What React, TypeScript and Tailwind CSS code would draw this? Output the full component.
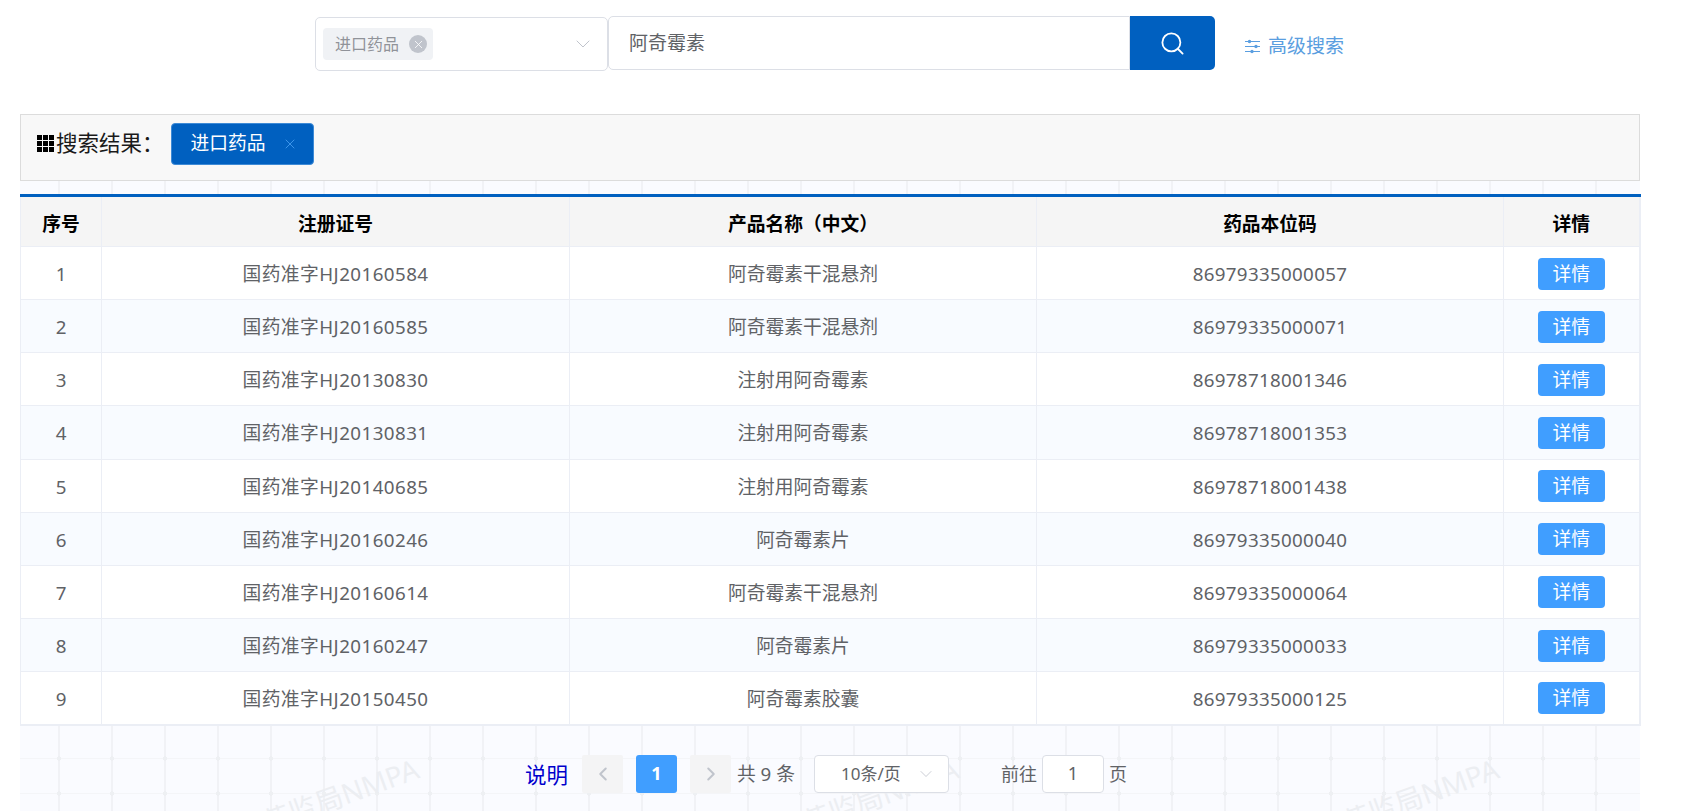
import React from "react";
import { ChevronDown, ChevronLeft, ChevronRight, Search, X } from "lucide-react";

interface DrugRow {
  id: number;
  reg: string;
  name: string;
  code: string;
}

const rows: DrugRow[] = [
  { id: 1, reg: "国药准字HJ20160584", name: "阿奇霉素干混悬剂", code: "86979335000057" },
  { id: 2, reg: "国药准字HJ20160585", name: "阿奇霉素干混悬剂", code: "86979335000071" },
  { id: 3, reg: "国药准字HJ20130830", name: "注射用阿奇霉素", code: "86978718001346" },
  { id: 4, reg: "国药准字HJ20130831", name: "注射用阿奇霉素", code: "86978718001353" },
  { id: 5, reg: "国药准字HJ20140685", name: "注射用阿奇霉素", code: "86978718001438" },
  { id: 6, reg: "国药准字HJ20160246", name: "阿奇霉素片", code: "86979335000040" },
  { id: 7, reg: "国药准字HJ20160614", name: "阿奇霉素干混悬剂", code: "86979335000064" },
  { id: 8, reg: "国药准字HJ20160247", name: "阿奇霉素片", code: "86979335000033" },
  { id: 9, reg: "国药准字HJ20150450", name: "阿奇霉素胶囊", code: "86979335000125" },
];

const headers = ["序号", "注册证号", "产品名称（中文）", "药品本位码", "详情"];

const App: React.FC = () => {
  return (
    <div className="w-[1690px] h-[811px] overflow-hidden bg-white text-[#606266] font-['Noto_Sans','Noto_Sans_CJK_SC',sans-serif]">
      {/* search bar */}
      <div className="flex items-center h-[114px] pl-[315px] pb-[28px]">
        <div className="flex items-center justify-between w-[293px] h-[54px] mt-[2px] pl-[7px] pr-[12px] border border-[#dcdfe6] rounded-[5px]">
          <div className="flex items-center h-[32px] w-[110px] pl-[12px] bg-[#f0f2f5] rounded-[4px] text-[16px] text-[#909399]">
            进口药品
            <span className="flex items-center justify-center ml-[10px] w-[18px] h-[18px] rounded-full bg-[#c0c4cc] text-white">
              <X size={13} strokeWidth={1.5} />
            </span>
          </div>
          <ChevronDown size={24} strokeWidth={1} className="text-[#c0c4cc]" />
        </div>
        <div className="flex items-center w-[522px] h-[54px] pl-[20px] border border-[#dcdfe6] rounded-l-[5px] text-[19px]">
          阿奇霉素
        </div>
        <div className="flex items-center justify-center w-[85px] h-[54px] bg-[#0060c0] rounded-r-[5px] text-white">
          <Search size={27} strokeWidth={1.6} />
        </div>
        <div className="flex items-center ml-[30px] mt-[6px] text-[19px] text-[#5a9ee0]">
          <svg width="15" height="15" viewBox="0 0 15 15" className="mr-[8px]" fill="currentColor">
            <rect x="0" y="2" width="15" height="1" />
            <rect x="0" y="7" width="15" height="1" />
            <rect x="0" y="12" width="15" height="1" />
            <circle cx="4.5" cy="2.5" r="1.7" />
            <circle cx="11" cy="7.5" r="1.7" />
            <circle cx="7" cy="12.5" r="1.7" />
          </svg>
          高级搜索
        </div>
      </div>

      <div className="w-[1620px] ml-[20px]">
        {/* result filter */}
        <div className="flex items-center h-[67px] pb-[8px] pl-[16px] bg-[#f8f8f8] border border-[#dcdcdc]">
          <svg width="17" height="17" viewBox="0 0 17 17" className="mr-[2px] text-black" fill="currentColor">
            <rect x="0" y="0" width="5" height="5" />
            <rect x="6" y="0" width="5" height="5" />
            <rect x="12" y="0" width="5" height="5" />
            <rect x="0" y="6" width="5" height="5" />
            <rect x="6" y="6" width="5" height="5" />
            <rect x="12" y="6" width="5" height="5" />
            <rect x="0" y="12" width="5" height="5" />
            <rect x="6" y="12" width="5" height="5" />
            <rect x="12" y="12" width="5" height="5" />
          </svg>
          <span className="text-[21.5px] text-[#1a1a1a]">搜索结果：</span>
          <div className="flex items-center w-[143px] h-[42px] ml-[7px] pl-[19px] bg-[#0060c0] border border-[#3d8ad6] rounded-[4px] text-[18.75px] text-white">
            进口药品
            <X size={16} strokeWidth={1.2} className="ml-[16px] text-[#4da3f5]" />
          </div>
        </div>

        {/* watermark area */}
        <div className="relative h-[630px] pt-[13px] bg-[#fafbff] bg-[radial-gradient(circle_at_4px_3.5px,#eef0f3_2px,transparent_2.5px),linear-gradient(to_right,#f1f2f6_2px,transparent_2px),linear-gradient(to_bottom,#f4f5f8_1px,transparent_1px)] bg-[size:53px_35px] bg-[position:35px_14px,38px_17px,38px_17px]">
          <span className="absolute left-[238px] top-[596px] -rotate-[20deg] text-[28px] leading-[36px] text-[#eceef2] whitespace-nowrap">药监局NMPA</span>
          <span className="absolute left-[778px] top-[596px] -rotate-[20deg] text-[28px] leading-[36px] text-[#eceef2] whitespace-nowrap">药监局NMPA</span>
          <span className="absolute left-[1318px] top-[596px] -rotate-[20deg] text-[28px] leading-[36px] text-[#eceef2] whitespace-nowrap">药监局NMPA</span>

          <table className="relative w-[1619px] table-fixed border-collapse border-t-[3px] border-[#0060c0] bg-white text-[18.75px]">
            <colgroup>
              <col className="w-[81px]" />
              <col className="w-[468px]" />
              <col className="w-[467px]" />
              <col className="w-[467px]" />
              <col className="w-[136px]" />
            </colgroup>
            <thead>
              <tr className="h-[51px] bg-[#f5f5f5]">
                {headers.map((h) => (
                  <th key={h} className="pt-[5px] border border-t-0 border-[#ebeef5] last:border-r-2 font-bold text-black text-center">
                    {h}
                  </th>
                ))}
              </tr>
            </thead>
            <tbody>
              {rows.map((row) => (
                <tr key={row.id} className={`h-[53.15px] ${row.id % 2 === 0 ? "bg-[#f8fbff]" : "bg-white"} last:border-b-2 last:border-[#ebeef5]`}>
                  <td className="pt-[2px] border border-[#ebeef5] text-center">{row.id}</td>
                  <td className="pt-[2px] border border-[#ebeef5] text-center tracking-[0.45px]">{row.reg}</td>
                  <td className="pt-[2px] border border-[#ebeef5] text-center">{row.name}</td>
                  <td className="pt-[2px] border border-[#ebeef5] text-center tracking-[0.32px]">{row.code}</td>
                  <td className="pt-[1px] border border-r-2 border-[#ebeef5] text-center">
                    <button type="button" className="w-[67px] h-[32px] leading-[32px] rounded-[4px] bg-[#409eff] text-white">
                      详情
                    </button>
                  </td>
                </tr>
              ))}
            </tbody>
          </table>

          {/* pagination */}
          <div className="relative flex items-center h-[38px] mt-[29px] pl-[505px] text-[18px]">
            <span className="w-[57px] pt-[2px] text-[21.5px] text-[#0000cc]">说明</span>
            <span className="flex items-center justify-center w-[41px] h-[38px] bg-[#f4f4f5] rounded-[2px] text-[#c0c4cc]">
              <ChevronLeft size={22} strokeWidth={2.2} />
            </span>
            <span className="flex items-center justify-center w-[41px] h-[38px] ml-[13px] bg-[#409eff] rounded-[3px] text-white font-bold text-[18px]">1</span>
            <span className="flex items-center justify-center w-[41px] h-[38px] ml-[13px] bg-[#f4f4f5] rounded-[2px] text-[#c0c4cc]">
              <ChevronRight size={22} strokeWidth={2.2} />
            </span>
            <span className="ml-[6px] w-[77px] text-[18.75px]">共 9 条</span>
            <div className="flex items-center justify-between w-[135px] h-[38px] pl-[26px] pr-[12px] bg-white border border-[#dcdfe6] rounded-[4px] text-[17px]">
              10条/页
              <ChevronDown size={20} strokeWidth={1} className="text-[#c0c4cc]" />
            </div>
            <span className="ml-[52px] pt-[2px]">前往</span>
            <div className="flex items-center justify-center w-[62px] h-[38px] ml-[5px] bg-white border border-[#dcdfe6] rounded-[4px]">1</div>
            <span className="ml-[5px] pt-[2px]">页</span>
          </div>
        </div>
      </div>
    </div>
  );
};

export default App;
